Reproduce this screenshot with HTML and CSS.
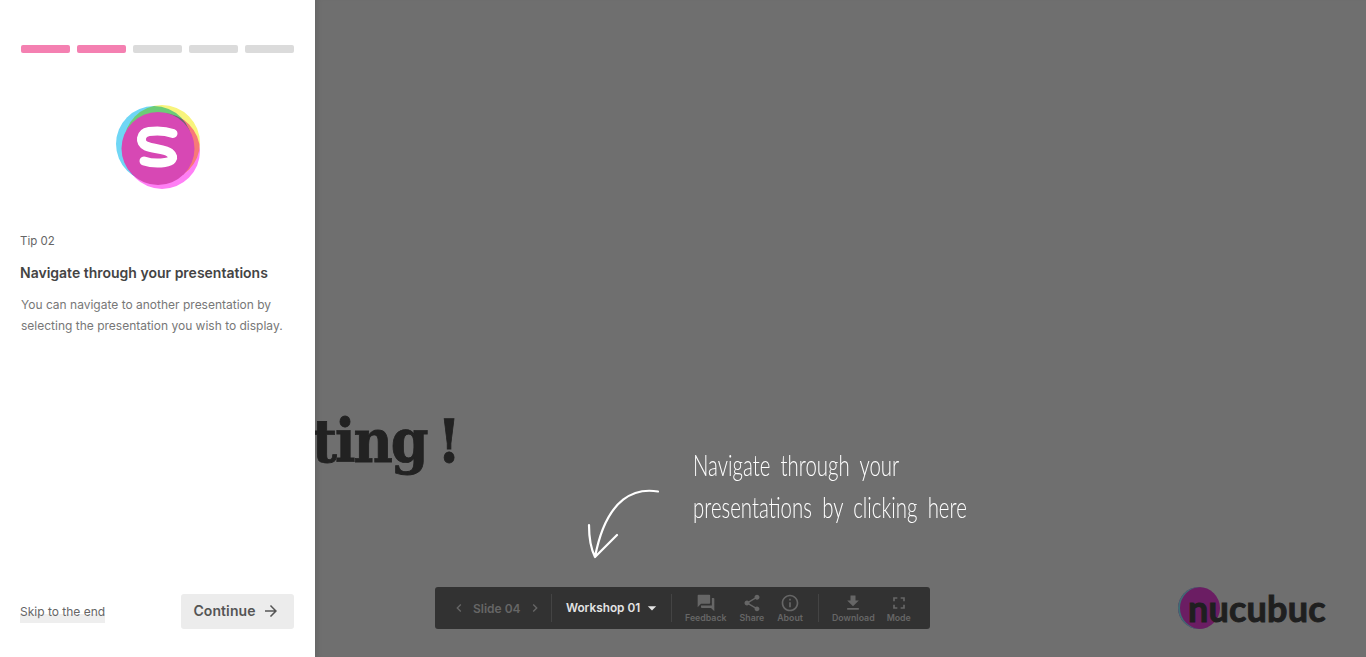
FILE: index.html
```html
<!DOCTYPE html>
<html lang="en">
  <head>
    <meta charset="UTF-8" />
    <meta name="viewport" content="width=device-width, initial-scale=1" />
    <title>Presentation tips</title>
    <link rel="stylesheet" href="styles.css">
  </head>
  <body>
    <div class="page">
      <aside class="tips">
        <div class="steps">
          <span class="step done"></span>
          <span class="step done"></span>
          <span class="step"></span>
          <span class="step"></span>
          <span class="step"></span>
        </div>

        <div class="badge">
          <svg viewBox="0 0 84 84" width="84" height="84">
            <circle class="ink" cx="38" cy="39" r="38" fill="#6fd6f5" />
            <circle class="ink" cx="46" cy="38" r="38" fill="#f8f47c" />
            <circle class="ink" cx="46" cy="46" r="38" fill="#ff7ff5" />
            <circle cx="42" cy="43.500" r="36.500" fill="#d748b4" />
            <path d="M57 28.500C50 26 40 25.500 33 26.500 24 28 23 38 30 41 37 44 50 44 54 48 60 53 55 57 49 57.500 42 58.500 34 58 28 56" fill="none" stroke="#fff" stroke-width="9" stroke-linecap="round" stroke-linejoin="round" />
          </svg>
        </div>

        <div class="tip-number">Tip 02</div>
        <h2 class="tip-title">Navigate through your presentations</h2>
        <p class="tip-text">You can navigate to another presentation by selecting the presentation you wish to display.</p>

        <div class="tips-footer">
          <a class="skip">Skip to the end</a>
          <button class="continue">
            Continue
            <svg viewBox="0 0 24 24" width="18" height="18"><path d="M12 4l-1.410 1.410L16.170 11H4v2h12.170l-5.580 5.590L12 20l8-8z" /></svg>
          </button>
        </div>
      </aside>

      <main class="slide">
        <div class="slide-title">ting !</div>

        <div class="hint">
          <svg class="hint-arrow" viewBox="0 0 72 72" width="72" height="72">
            <path d="M71 2.500C50 -1 20 6 8 68M2 36C2 48 4 60 8 68L30 46" fill="none" stroke="#fff" stroke-width="2.200" stroke-linecap="round" stroke-linejoin="round" />
          </svg>
          <div class="hint-text">Navigate through your<br />presentations by clicking here</div>
        </div>

        <div class="toolbar">
          <div class="tool-group nav">
            <svg class="chev" viewBox="0 0 24 24" width="16" height="16"><path d="M15.410 7.410L14 6l-6 6 6 6 1.410-1.410L10.830 12z" /></svg>
            <span class="slide-no">Slide 04</span>
            <svg class="chev" viewBox="0 0 24 24" width="16" height="16"><path d="M10 6L8.590 7.410 13.170 12l-4.580 4.590L10 18l6-6z" /></svg>
          </div>
          <div class="tool-group picker">
            <span>Workshop 01</span>
            <svg viewBox="0 0 24 24" width="20" height="20"><path d="M7 10l5 5 5-5z" /></svg>
          </div>
          <div class="tool-group actions">
            <div class="tool">
              <svg viewBox="0 0 24 24" width="20" height="20"><path d="M21 6h-2v9H6v2c0 .55.45 1 1 1h11l4 4V7c0-.55-.45-1-1-1zm-4 6V3c0-.55-.45-1-1-1H3c-.55 0-1 .45-1 1v14l4-4h10c.55 0 1-.45 1-1z" /></svg>
              <span>Feedback</span>
            </div>
            <div class="tool">
              <svg viewBox="0 0 24 24" width="20" height="20"><path d="M18 16.080c-.76 0-1.440.3-1.960.77L8.910 12.700c.05-.23.09-.46.09-.7s-.04-.47-.09-.7l7.050-4.110c.54.5 1.250.81 2.040.81 1.660 0 3-1.340 3-3s-1.340-3-3-3-3 1.340-3 3c0 .24.04.47.09.7L8.040 9.810C7.500 9.310 6.790 9 6 9c-1.660 0-3 1.340-3 3s1.340 3 3 3c.79 0 1.500-.31 2.040-.81l7.120 4.160c-.05.21-.08.43-.08.65 0 1.610 1.310 2.920 2.920 2.920s2.920-1.310 2.920-2.920-1.310-2.920-2.920-2.920z" /></svg>
              <span>Share</span>
            </div>
            <div class="tool">
              <svg viewBox="0 0 24 24" width="20" height="20"><path d="M11 7h2v2h-2zm0 4h2v6h-2zm1-9C6.480 2 2 6.480 2 12s4.480 10 10 10 10-4.480 10-10S17.520 2 12 2zm0 18c-4.410 0-8-3.590-8-8s3.590-8 8-8 8 3.590 8 8-3.590 8-8 8z" /></svg>
              <span>About</span>
            </div>
          </div>
          <div class="tool-group extras">
            <div class="tool">
              <svg viewBox="0 0 24 24" width="20" height="20"><path d="M19 9h-4V3H9v6H5l7 7 7-7zM5 18v2h14v-2H5z" /></svg>
              <span>Download</span>
            </div>
            <div class="tool">
              <svg viewBox="0 0 24 24" width="20" height="20"><path d="M7 14H5v5h5v-2H7v-3zm-2-4h2V7h3V5H5v5zm12 7h-3v2h5v-5h-2v3zM14 5v2h3v3h2V5h-5z" /></svg>
              <span>Mode</span>
            </div>
          </div>
        </div>

        <div class="logo">
          <div class="logo-mark"></div>
          <span class="logo-word">nucubuc</span>
        </div>
      </main>
    </div>
  </body>
</html>
```

FILE: styles.css
```css
* {
  box-sizing: border-box;
}
html,
body {
  height: 100%;
}
body {
  margin: 0;
  font-family: "Inter", "Open Sans", sans-serif;
  overflow: hidden;
}
.page {
  display: flex;
  height: 657px;
}

/* left panel */
.tips {
  width: 315px;
  flex: none;
  background: #fff;
  padding: 45px 21px 28px 20px;
  display: flex;
  flex-direction: column;
  position: relative;
  z-index: 2;
}
.steps {
  display: flex;
  gap: 7px;
  padding-left: 1px;
}
.step {
  flex: 1;
  height: 8px;
  border-radius: 2px;
  background: #dbdbdb;
}
.step.done {
  background: #f480b1;
}
.badge {
  display: flex;
  justify-content: center;
  margin-top: 52px;
  padding-left: 2px;
}
.badge svg {
  isolation: isolate;
}
.ink {
  mix-blend-mode: multiply;
}
.tip-number {
  margin-top: 43px;
  font-size: 11.500px;
  line-height: 18px;
  color: #666;
}
.tip-title {
  margin: 13px 0 0;
  font-size: 14px;
  font-weight: 600;
  line-height: 20px;
  color: #444;
}
.tip-text {
  margin: 11px 0 0 1px;
  font-size: 12px;
  line-height: 21px;
  color: #777;
}
.tips-footer {
  margin-top: auto;
  display: flex;
  justify-content: space-between;
  align-items: center;
}
.skip {
  font-size: 12px;
  line-height: 22px;
  color: #666;
  background: linear-gradient(#fff 60%, #eee 60%);
  width: 85px;
  white-space: nowrap;
}
.continue {
  width: 113px;
  height: 35px;
  border: none;
  border-radius: 3px;
  background: #ececec;
  color: #555;
  font-family: inherit;
  font-size: 14px;
  font-weight: 600;
  letter-spacing: 0.1px;
  display: flex;
  align-items: center;
  justify-content: center;
  gap: 6px;
  padding: 0 2px 2px 0;
}
.continue svg {
  fill: #555;
}

/* dimmed slide */
.slide {
  flex: 1;
  background: #6f6f6f;
  position: relative;
  overflow: hidden;
  box-shadow: inset 6px 0 6px -5px rgba(0, 0, 0, 0.12);
}
.slide-title {
  position: absolute;
  left: -3px;
  top: 401px;
  font-family: "DejaVu Serif Condensed", "DejaVu Serif", serif;
  font-weight: 700;
  font-size: 60px;
  line-height: 80px;
  letter-spacing: -2px;
  word-spacing: -6px;
  -webkit-text-stroke: 0.8px #222;
  color: #222;
  white-space: nowrap;
}
.hint {
  position: absolute;
  left: 272px;
  top: 443px;
  display: flex;
  color: #fff;
}
.hint-arrow {
  margin-top: 46px;
}
.hint-text {
  margin-left: 34px;
  font-family: "Lato", sans-serif;
  font-weight: 300;
  font-size: 30px;
  line-height: 42px;
  word-spacing: 7px;
  white-space: nowrap;
  transform: scaleX(0.68);
  transform-origin: left top;
}

/* bottom toolbar */
.toolbar {
  position: absolute;
  left: 120px;
  top: 587px;
  width: 495px;
  height: 42px;
  background: #323232;
  border-radius: 3px;
  display: flex;
  align-items: center;
  color: #666;
}
.toolbar svg {
  fill: currentColor;
}
.tool-group {
  display: flex;
  align-items: center;
  height: 28px;
  border-right: 1px solid #444;
}
.nav {
  width: 117px;
  padding-left: 16px;
  gap: 6px;
}
.slide-no {
  font-size: 12px;
  font-weight: 600;
}
.picker {
  width: 120px;
  padding-left: 14px;
  gap: 2px;
  color: #e4e4e4;
  font-size: 11.800px;
  font-weight: 600;
}
.actions {
  width: 147px;
  padding-left: 13px;
  gap: 13px;
}
.extras {
  border-right: none;
  padding-left: 13px;
  gap: 12px;
}
.tool {
  display: flex;
  flex-direction: column;
  align-items: center;
  font-size: 8.800px;
  font-weight: 600;
  line-height: 10px;
}
.logo {
  position: absolute;
  left: 863px;
  top: 587px;
  display: flex;
  align-items: center;
}
.logo-mark {
  width: 42px;
  height: 42px;
  border-radius: 50%;
  background: #6b1d63;
  box-shadow: inset 2px 0 0 #3f6d74;
}
.logo-word {
  margin-left: -32px;
  font-family: "Lato", sans-serif;
  font-weight: 700;
  font-size: 36px;
  line-height: 42px;
  letter-spacing: 0.2px;
  -webkit-text-stroke: 1px #1f1f1f;
  color: #1f1f1f;
}
```
